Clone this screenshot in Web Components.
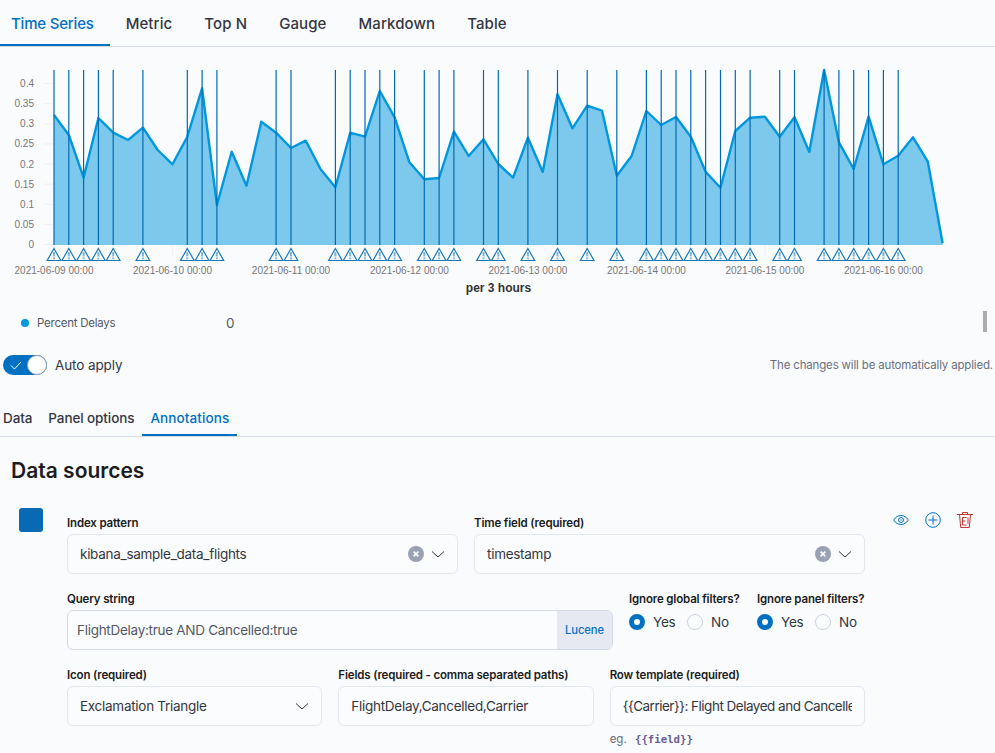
<!DOCTYPE html>
<html>
<head>
<meta charset="utf-8">
<title>Time Series</title>
<style>
  html, body { margin: 0; height: 753px; overflow: hidden; background: #fafbfd; }
  body { font-family: Inter, "Liberation Sans", sans-serif; color: #343741; }
</style>
</head>
<body>
<tab-bar size="large" active="Time Series" tabs="Time Series,Metric,Top N,Gauge,Markdown,Table"></tab-bar>
<series-chart></series-chart>
<chart-legend label="Percent Delays" value="0"></chart-legend>
<apply-bar></apply-bar>
<tab-bar active="Annotations" tabs="Data,Panel options,Annotations"></tab-bar>
<section-title>Data sources</section-title>
<annotation-row></annotation-row>

<script>
const ICONS = {
    chevron: '<svg width="16" height="16" viewBox="0 0 16 16"><path d="M2 5.500 8 11l6-5.500" fill="none" stroke="#343741" stroke-width="1"/></svg>',
    clear: '<svg width="16" height="16" viewBox="0 0 16 16"><circle cx="8" cy="8" r="8" fill="#98a2b3"/><path d="M5.600 5.600l4.800 4.800m0-4.800l-4.800 4.800" stroke="#fff" stroke-width="1.600"/></svg>',
    eye: '<svg width="16" height="16" viewBox="0 0 16 16" fill="none" stroke="#0071c2"><path d="M.7 8C2.500 5.100 5 3.500 8 3.500s5.500 1.600 7.300 4.500C13.500 10.900 11 12.500 8 12.500S2.500 10.900.7 8z"/><circle cx="8" cy="8" r="2.500"/><circle cx="8" cy="8" r="1" fill="#0071c2" stroke="none" opacity=".5"/></svg>',
    plus: '<svg width="16" height="16" viewBox="0 0 16 16" fill="none" stroke="#0071c2"><circle cx="8" cy="8" r="7.300"/><path d="M8 3.500v9M3.500 8h9"/></svg>',
    trash: '<svg width="16" height="16" viewBox="0 0 16 16" fill="none" stroke="#bd271e" stroke-opacity=".9"><path d="M0 2.500h16M5.500 2.500V.5h5v2M2.500 2.500l1.200 13h8.600l1.200-13M5.500 5.500v7.500M5.500 5.500h4M5.500 9h3M5.500 13h4M11 5.500v6.500"/></svg>'
};

class TabBar extends HTMLElement {
    connectedCallback() {
        const large = this.getAttribute('size') === 'large';
        const active = this.getAttribute('active');
        const tabs = this.getAttribute('tabs').split(',');
        this.attachShadow({ mode: 'open' });
        this.shadowRoot.innerHTML = `
            <style>
                :host { display: flex; border-bottom: 1px solid #d3dae6; height: ${large ? 46 : 36}px;
                    margin-top: ${large ? 0 : 16}px; }
                .tab { display: flex; align-items: center; color: #343741; font-size: ${large ? 15 : 13.500}px;
                    letter-spacing: ${large ? 0.100 : -0.100}px; font-weight: 500; padding: 0 ${large ? '16px' : '8px'};
                    white-space: nowrap; }
                .tab:first-of-type { margin-left: -5px; }
                .tab.on { color: #0071c2; box-shadow: inset 0 -2px 0 #0071c2;
                    letter-spacing: ${large ? -0.200 : 0.100}px; }
            </style>
            ${tabs.map(t => `<div class="tab ${t === active ? 'on' : ''}">${t}</div>`).join('')}
        `;
    }
}

class SeriesChart extends HTMLElement {
    connectedCallback() {
        const ys = [115,135,177.700,118,132.700,140,127.700,150,164.300,136.700,88.300,205,151.700,185.700,121.700,132.700,148,140.700,169.300,187.300,132.700,136.700,91,117.300,162.300,179.300,178,131.700,156,139.300,164,177.700,137.700,172,94.300,128.300,105.700,110.700,175.700,156,111,125,117,136.700,171.700,187.700,131,117.700,116.700,136.700,117.300,152,70,142.300,169,116.700,164.300,155.700,137.300,161.700,243.300];
        const marks = [0,1,2,3,4,6,9,10,11,15,16,19,20,21,22,23,25,26,27,29,30,32,34,36,38,40,41,42,43,44,45,46,47,49,50,52,53,54,55,56,57];
        const x0 = 54, step = 14.81, base = 245;
        const px = i => (x0 + i * step).toFixed(1);
        const line = ys.map((y, i) => `${px(i)},${y}`).join(' ');
        const area = `${x0},${base} ${line} ${px(60)},${base}`;

        const yLabels = ['0','0.05','0.1','0.15','0.2','0.25','0.3','0.35','0.4'].map((t, i) => {
            const y = 244.500 - i * 20.120;
            return `<line x1="44" x2="54" y1="${y}" y2="${y}" stroke="#eef0f3"/>
                <text x="34" y="${y + 3.500}" text-anchor="end">${t}</text>`;
        }).join('');

        const days = ['09','10','11','12','13','14','15','16'];
        const xLabels = days.map((d, i) => {
            const x = x0 + i * 8 * step;
            return `<line x1="${x}" x2="${x}" y1="245" y2="255" stroke="#eef0f3"/>
                <text x="${x}" y="273.500" text-anchor="middle">2021-06-${d} 00:00</text>`;
        }).join('');

        const warnings = marks.map(i => {
            const x = px(i);
            return `<line x1="${x}" x2="${x}" y1="70" y2="245" stroke="#006bb4" stroke-width="1.200"/>
                <g transform="translate(${x} 0)">
                    <path d="M0 248.500 6.800 260.500H-6.800Z" fill="none" stroke="#1a78bd" stroke-width="1.200"/>
                    <path d="M0 252v4.500M0 257.500v1.800" stroke="#7db5dd" stroke-width="2"/>
                </g>`;
        }).join('');

        this.attachShadow({ mode: 'open' });
        this.shadowRoot.innerHTML = `
            <style>
                :host { display: block; height: 253px; }
                svg { display: block; }
                text { font: 10px "Liberation Sans", Arial, sans-serif; fill: #777; }
                .title { font-size: 12px; font-weight: 700; fill: #333; }
            </style>
            <svg width="995" height="253" viewBox="0 47 995 253">
                ${yLabels}
                ${xLabels}
                <polygon points="${area}" fill="#0098dd" fill-opacity=".5"/>
                <polyline points="${line}" fill="none" stroke="#0098dd" stroke-width="2.400" stroke-linejoin="round"/>
                ${warnings}
                <text class="title" x="498.500" y="292" text-anchor="middle">per 3 hours</text>
            </svg>
        `;
    }
}

class ChartLegend extends HTMLElement {
    connectedCallback() {
        this.attachShadow({ mode: 'open' });
        this.shadowRoot.innerHTML = `
            <style>
                :host { display: flex; align-items: center; height: 46px; position: relative; padding-left: 21px; }
                .dot { width: 8px; height: 8px; border-radius: 50%; background: #0098dd; margin-right: 8px; }
                .label { font-size: 11.500px; letter-spacing: -0.250px; color: #535966; width: 189px; }
                .value { font-size: 13.500px; color: #535966; }
                .thumb { position: absolute; left: 983px; top: 11px; width: 4px; height: 21px; background: #adadad; }
            </style>
            <span class="dot"></span>
            <span class="label">${this.getAttribute('label')}</span>
            <span class="value">${this.getAttribute('value')}</span>
            <span class="thumb"></span>
        `;
    }
}

class ApplyBar extends HTMLElement {
    constructor() {
        super();
        this.attachShadow({ mode: 'open' });
        this.shadowRoot.innerHTML = `
            <style>
                :host { display: flex; align-items: center; height: 38px; padding: 0 2px 0 3px; }
                .track { position: relative; width: 44px; height: 20px; border-radius: 10px; background: #0071c2; margin-right: 8px; }
                .knob { position: absolute; right: 0; top: 0; width: 18px; height: 18px; border: 1px solid #98a2b3;
                    border-radius: 50%; background: #fff; }
                svg { position: absolute; left: 7px; top: 4px; }
                .label { font-size: 13.500px; letter-spacing: -0.100px; color: #343741; flex: 1; }
                .note { font-size: 11.500px; letter-spacing: -0.170px; color: #69707d; }
            </style>
            <span class="track">
                <svg width="12" height="12" viewBox="0 0 12 12"><path d="M1 6.500 4.500 10 11 3" fill="none" stroke="#fff"/></svg>
                <span class="knob"></span>
            </span>
            <span class="label">Auto apply</span>
            <span class="note">The changes will be automatically applied.</span>
        `;
    }
}

class SectionTitle extends HTMLElement {
    constructor() {
        super();
        this.attachShadow({ mode: 'open' });
        this.shadowRoot.innerHTML = `
            <style>
                :host { display: block; padding: 20px 0 0 11px; height: 51px; box-sizing: border-box;
                    font-size: 21px; line-height: 27px; font-weight: 600; color: #1a1c21; }
            </style>
            <slot></slot>
        `;
    }
}

class FormField extends HTMLElement {
    constructor() {
        super();
        this.attachShadow({ mode: 'open' });
        this.shadowRoot.innerHTML = `
            <style>
                :host { display: block; flex: 1 1 0; min-width: 0; }
                label { display: block; font-size: 11.500px; letter-spacing: -0.160px; font-weight: 600; line-height: 18px;
                    height: 18px; margin-bottom: 2px; color: #1a1c21; white-space: nowrap; }
            </style>
            <label>${this.getAttribute('label')}</label>
            <slot></slot>
        `;
    }
}

class TextBox extends HTMLElement {
    connectedCallback() {
        const icons = (this.getAttribute('icons') || '').split(' ').filter(Boolean);
        const append = this.getAttribute('append');
        this.attachShadow({ mode: 'open' });
        this.shadowRoot.innerHTML = `
            <style>
                :host { display: flex; align-items: center; height: 40px; box-sizing: border-box;
                    border: 1px solid #e3e8f0; border-radius: 6px; background: #fbfcfd; overflow: hidden; }
                :host([strong]) { border-color: #d3dae6; }
                .text { flex: 1; min-width: 0; margin: 0 12px; font-size: 13.500px; letter-spacing: -0.280px; color: #343741;
                    white-space: nowrap; overflow: hidden; }
                :host([strong]) .text { margin: 0 9px; color: #535966; }
                :host([tight]) .text { letter-spacing: -0.500px; }
                .icons { display: flex; gap: 6px; margin-right: 11px; }
                .icons svg { display: block; }
                .append { align-self: stretch; display: flex; align-items: center; justify-content: center; width: 55px;
                    background: #e6e9f2; color: #0071c2; font-size: 11.200px; letter-spacing: -0.100px; font-weight: 500; }
            </style>
            <div class="text"><slot></slot></div>
            ${icons.length ? `<div class="icons">${icons.map(n => ICONS[n]).join('')}</div>` : ''}
            ${append ? `<div class="append">${append}</div>` : ''}
        `;
    }
}

class YesNo extends HTMLElement {
    constructor() {
        super();
        this.attachShadow({ mode: 'open' });
        this.shadowRoot.innerHTML = `
            <style>
                :host { display: flex; align-items: center; height: 24px; font-size: 13.500px; letter-spacing: -0.200px; color: #343741; }
                .radio { width: 16px; height: 16px; box-sizing: border-box; border-radius: 50%; margin-right: 8px; }
                .on { border: 5px solid #0071c2; background: #fff; }
                .off { border: 1px solid #ccd3de; background: #fbfcfd; margin-left: 8px; }
                .yes { width: 26px; }
            </style>
            <span class="radio on"></span><span class="yes">Yes</span>
            <span class="radio off"></span><span>No</span>
        `;
    }
}

class AnnotationRow extends HTMLElement {
    constructor() {
        super();
        this.attachShadow({ mode: 'open' });
        this.shadowRoot.innerHTML = `
            <style>
                :host { display: flex; padding: 20px 0 0 19px; }
                .swatch { flex: none; width: 24px; height: 24px; border-radius: 3px; background: #0a69b3; margin-right: 24px; }
                .form { flex: none; width: 798px; display: flex; flex-direction: column; gap: 16px; padding-top: 6px; }
                .row { display: flex; gap: 16px; }
                .query { flex: none; width: 546px; }
                .toggle { flex: none; width: 112px; }
                .actions { display: flex; gap: 16px; margin: 4px 0 0 28px; }
                .actions svg { display: block; }
                .help { font-size: 11.500px; line-height: 18px; color: #69707d; margin-top: 4px; white-space: nowrap; }
                code { font: 700 10.700px "DejaVu Sans Mono", monospace; color: #6a5f8f; margin-left: 5px; }
            </style>
            <div class="swatch"></div>
            <div class="form">
                <div class="row">
                    <form-field label="Index pattern"><text-box icons="clear chevron">kibana_sample_data_flights</text-box></form-field>
                    <form-field label="Time field (required)"><text-box icons="clear chevron">timestamp</text-box></form-field>
                </div>
                <div class="row">
                    <form-field class="query" label="Query string"><text-box strong append="Lucene">FlightDelay:true AND Cancelled:true</text-box></form-field>
                    <form-field class="toggle" label="Ignore global filters?"><yes-no></yes-no></form-field>
                    <form-field class="toggle" label="Ignore panel filters?"><yes-no></yes-no></form-field>
                </div>
                <div class="row">
                    <form-field label="Icon (required)"><text-box icons="chevron">Exclamation Triangle</text-box></form-field>
                    <form-field label="Fields (required - comma separated paths)"><text-box>FlightDelay,Cancelled,Carrier</text-box></form-field>
                    <form-field label="Row template (required)">
                        <text-box tight>{{Carrier}}: Flight Delayed and Cancelled</text-box>
                        <div class="help">eg. <code>{{field}}</code></div>
                    </form-field>
                </div>
            </div>
            <div class="actions">${ICONS.eye}${ICONS.plus}${ICONS.trash}</div>
        `;
    }
}

customElements.define('tab-bar', TabBar);
customElements.define('series-chart', SeriesChart);
customElements.define('chart-legend', ChartLegend);
customElements.define('apply-bar', ApplyBar);
customElements.define('section-title', SectionTitle);
customElements.define('form-field', FormField);
customElements.define('text-box', TextBox);
customElements.define('yes-no', YesNo);
customElements.define('annotation-row', AnnotationRow);
</script>
</body>
</html>
